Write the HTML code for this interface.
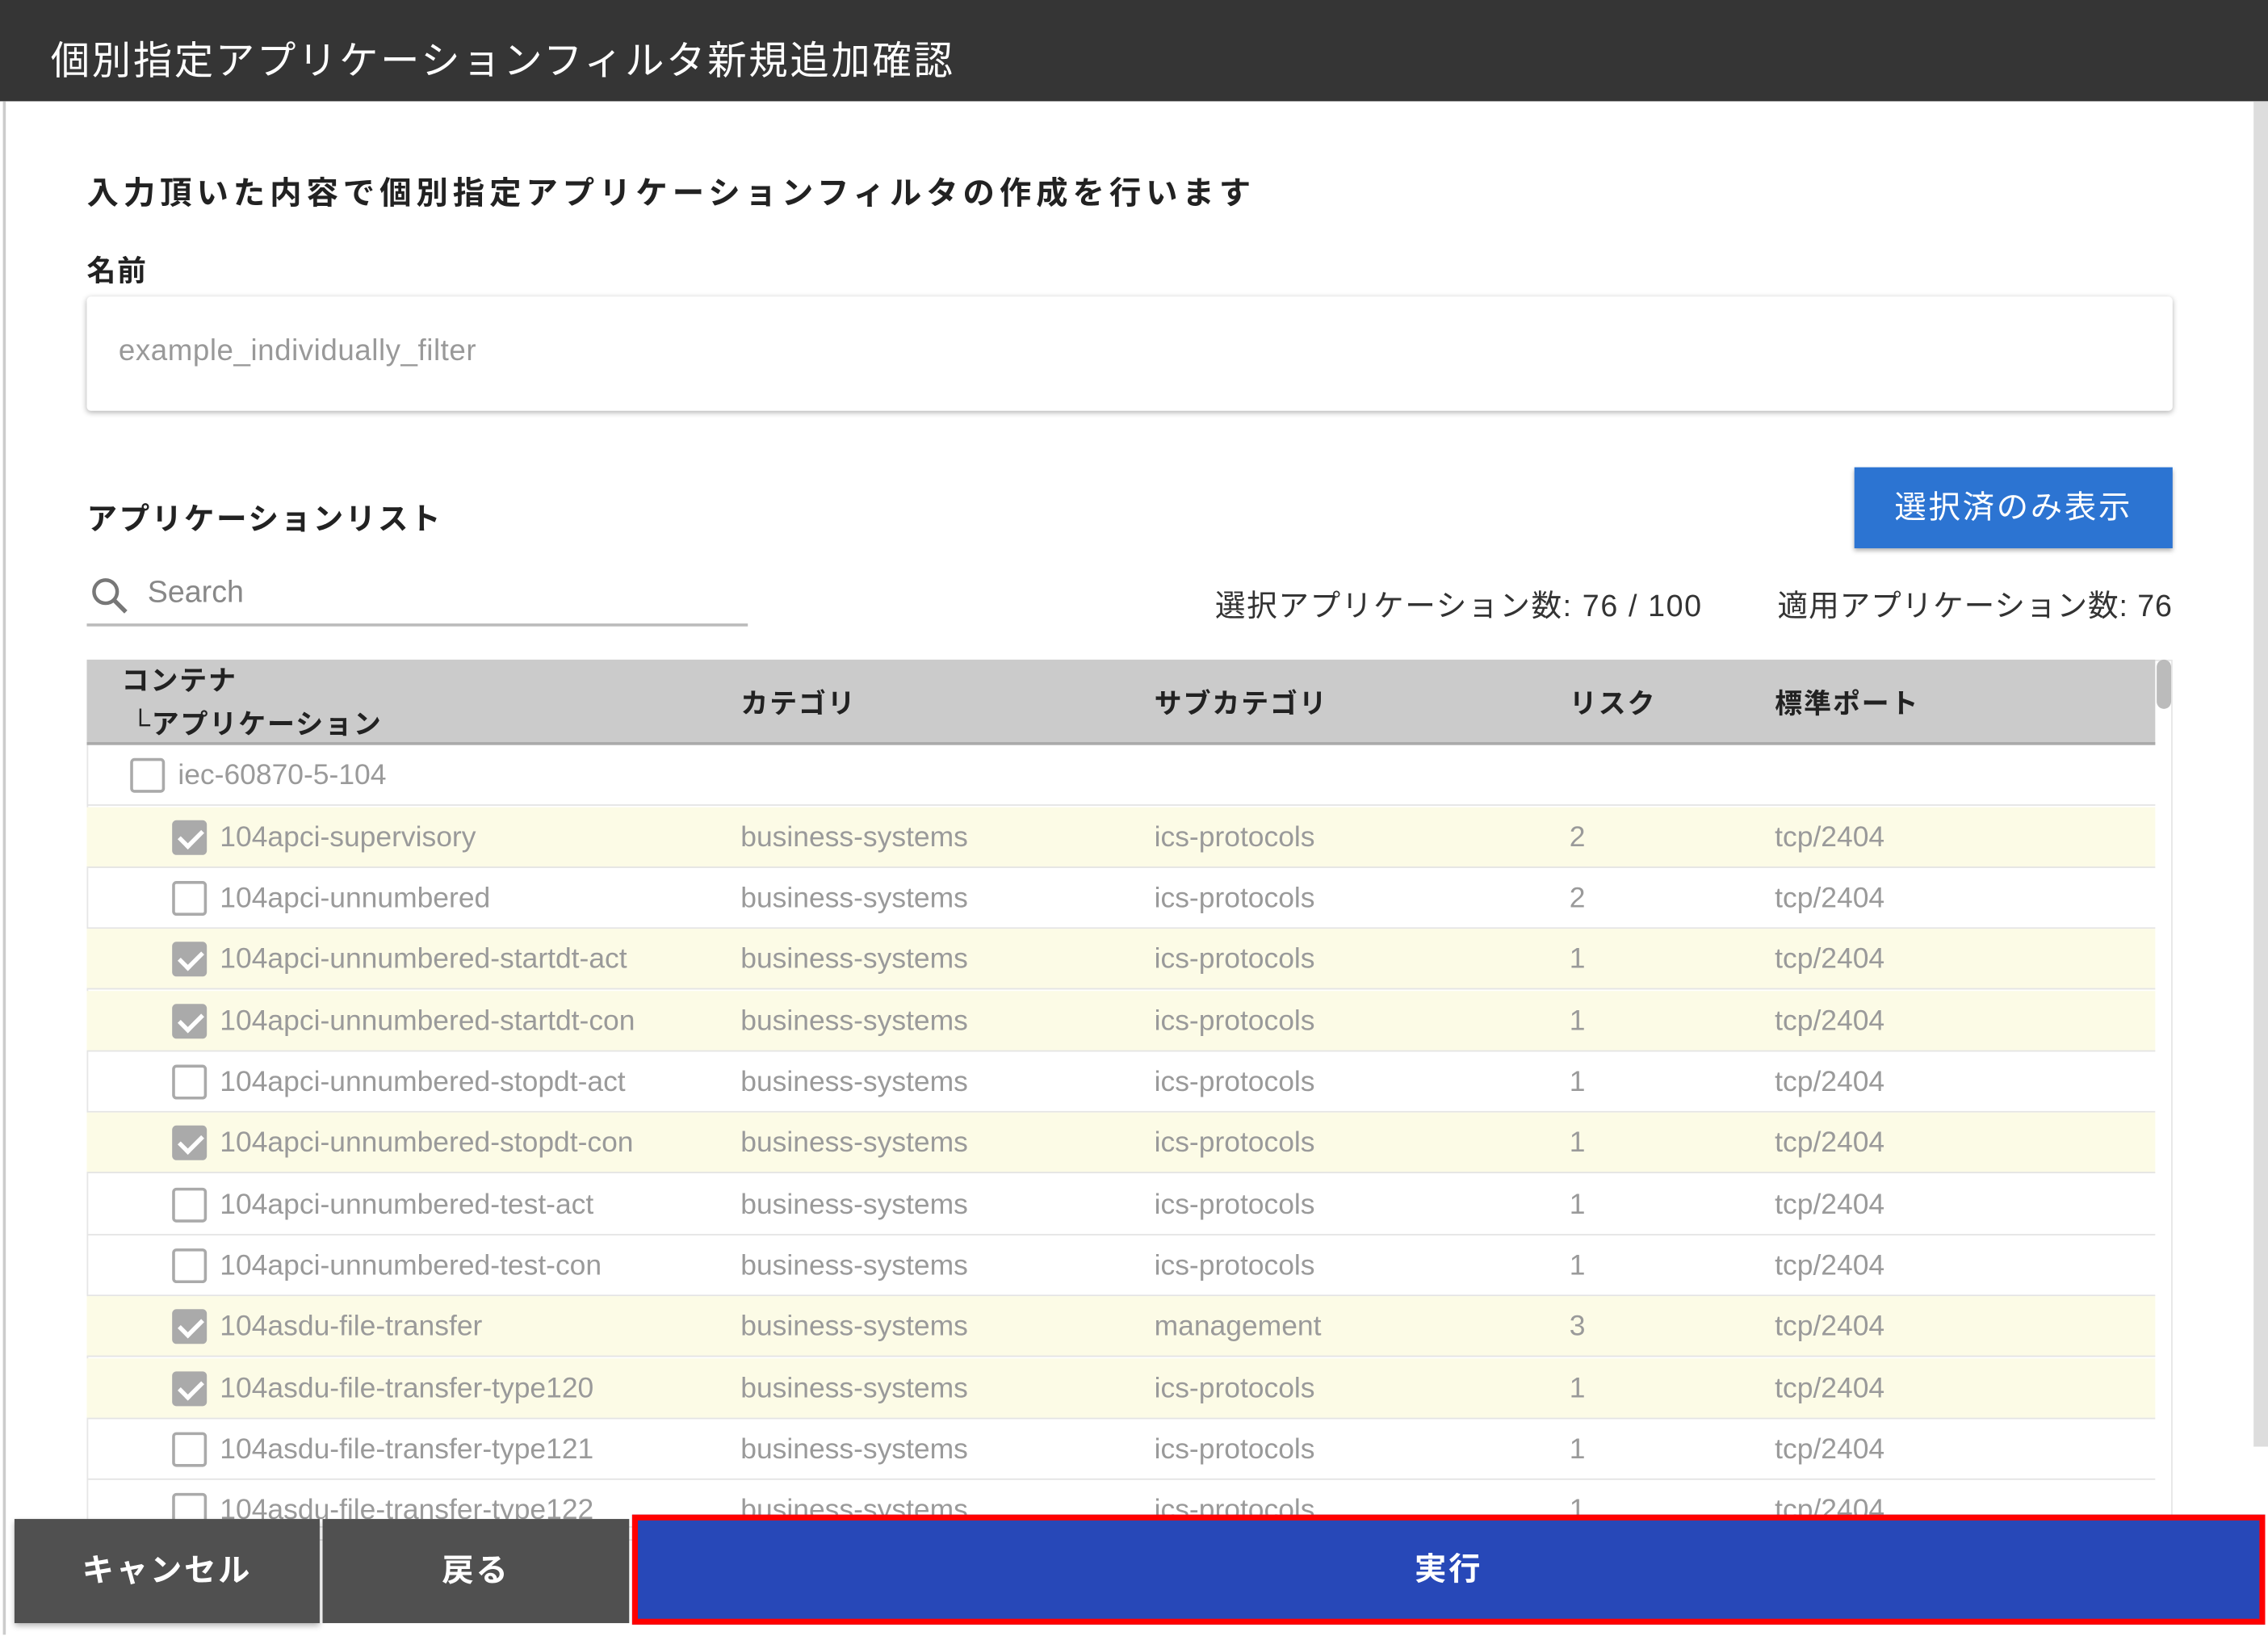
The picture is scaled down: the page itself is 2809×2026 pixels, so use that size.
<!DOCTYPE html>
<html><head><meta charset="utf-8"><style>
*{margin:0;padding:0;box-sizing:border-box}
body{width:2809px;height:2025px;overflow:hidden;background:#fff;font-family:"Liberation Sans","Noto Sans CJK JP",sans-serif}
#w{width:1568px;height:1131px;transform:scale(1.7915);transform-origin:0 0;position:relative;background:#fff}
.a{position:absolute;white-space:nowrap}
.hd{left:0;top:0;width:1568px;height:70px;background:#353535}
.b{font-weight:bold;color:#222}
.row{position:absolute;left:60px;width:1430px;height:42px;border-bottom:1.5px solid #e4e4e4;font-size:19.8px;color:#9a9a9a}
.row span{position:absolute;top:10px}
.hl{background:#fcfbe6}
.cb{position:absolute;top:9px;width:24px;height:24px;border:2px solid #aaa;border-radius:3px;background:#fff}
.cb.on{background:#aaa;border-color:#aaa}
.cb.on:after{content:"";position:absolute;left:6px;top:1px;width:7px;height:13px;border:solid #fff;border-width:0 3px 3px 0;transform:rotate(45deg)}
</style></head><body><div id="w">
<div class="a hd"></div>
<div class="a" style="left:35px;top:20px;font-size:27px;color:#fff;letter-spacing:1.5px">個別指定アプリケーションフィルタ新規追加確認</div>
<div class="a" style="left:2px;top:70px;width:1.5px;height:1060px;background:#ccc"></div>
<div class="a" style="left:1558px;top:70px;width:10px;height:930px;background:#ddd"></div>
<div class="a b" style="left:60px;top:116px;font-size:22px;letter-spacing:3.3px">入力頂いた内容で個別指定アプリケーションフィルタの作成を行います</div>
<div class="a b" style="left:60px;top:171px;font-size:20px;letter-spacing:1px">名前</div>
<div class="a" style="left:60px;top:205px;width:1442px;height:79px;background:#fff;box-shadow:0 1px 4px rgba(0,0,0,.3);border-radius:3px"></div>
<div class="a" style="left:82px;top:231px;font-size:20.5px;color:#999;letter-spacing:.3px">example_individually_filter</div>
<div class="a b" style="left:60px;top:343px;font-size:21px;letter-spacing:1.4px">アプリケーションリスト</div>
<div class="a" style="left:1282px;top:323px;width:220px;height:56px;background:#2c74d2;box-shadow:0 2px 3px rgba(0,0,0,.3);color:#fff;font-size:22px;text-align:center;line-height:56px;letter-spacing:1.5px">選択済のみ表示</div>
<svg class="a" style="left:62px;top:398px" width="28" height="28" viewBox="0 0 28 28"><circle cx="11" cy="11" r="8" fill="none" stroke="#777" stroke-width="2.5"/><path d="M17 17l8 8" stroke="#777" stroke-width="3"/></svg>
<div class="a" style="left:102px;top:398px;font-size:21px;color:#888">Search</div>
<div class="a" style="left:60px;top:431px;width:457px;height:1.5px;background:#bbb"></div>
<div class="a" style="left:840px;top:403px;font-size:21px;color:#333;letter-spacing:.9px">選択アプリケーション数: 76 / 100</div>
<div class="a" style="right:66px;top:403px;font-size:21px;color:#333;letter-spacing:.5px">適用アプリケーション数: 76</div>
<div class="a" style="left:60px;top:456px;width:1442px;height:600px;border:1px solid #e6e6e6"></div>
<div class="a" style="left:60px;top:456px;width:1430px;height:59px;background:#cbcbcb;border-bottom:2px solid #aaa"></div>
<div class="a" style="left:1491px;top:456px;width:10px;height:34px;background:#bbb;border-radius:5px"></div>
<div class="a b" style="left:84px;top:457px;font-size:19px;line-height:30px;letter-spacing:1px">コンテナ<br>&nbsp;└アプリケーション</div>
<div class="a b" style="left:512px;top:472px;font-size:19px;letter-spacing:1px">カテゴリ</div>
<div class="a b" style="left:798px;top:472px;font-size:19px;letter-spacing:1px">サブカテゴリ</div>
<div class="a b" style="left:1085px;top:472px;font-size:19px;letter-spacing:1px">リスク</div>
<div class="a b" style="left:1227px;top:472px;font-size:19px;letter-spacing:1px">標準ポート</div>
<div class="row" style="top:515px"><div class="cb" style="left:30px"></div><span style="left:63px">iec-60870-5-104</span></div>
<div class="row hl" style="top:557.5px"><div class="cb on" style="left:59px"></div><span style="left:92px">104apci-supervisory</span><span style="left:452px">business-systems</span><span style="left:738px">ics-protocols</span><span style="left:1025px">2</span><span style="left:1167px">tcp/2404</span></div>
<div class="row" style="top:600px"><div class="cb" style="left:59px"></div><span style="left:92px">104apci-unnumbered</span><span style="left:452px">business-systems</span><span style="left:738px">ics-protocols</span><span style="left:1025px">2</span><span style="left:1167px">tcp/2404</span></div>
<div class="row hl" style="top:642px"><div class="cb on" style="left:59px"></div><span style="left:92px">104apci-unnumbered-startdt-act</span><span style="left:452px">business-systems</span><span style="left:738px">ics-protocols</span><span style="left:1025px">1</span><span style="left:1167px">tcp/2404</span></div>
<div class="row hl" style="top:684.5px"><div class="cb on" style="left:59px"></div><span style="left:92px">104apci-unnumbered-startdt-con</span><span style="left:452px">business-systems</span><span style="left:738px">ics-protocols</span><span style="left:1025px">1</span><span style="left:1167px">tcp/2404</span></div>
<div class="row" style="top:727px"><div class="cb" style="left:59px"></div><span style="left:92px">104apci-unnumbered-stopdt-act</span><span style="left:452px">business-systems</span><span style="left:738px">ics-protocols</span><span style="left:1025px">1</span><span style="left:1167px">tcp/2404</span></div>
<div class="row hl" style="top:769px"><div class="cb on" style="left:59px"></div><span style="left:92px">104apci-unnumbered-stopdt-con</span><span style="left:452px">business-systems</span><span style="left:738px">ics-protocols</span><span style="left:1025px">1</span><span style="left:1167px">tcp/2404</span></div>
<div class="row" style="top:811.5px"><div class="cb" style="left:59px"></div><span style="left:92px">104apci-unnumbered-test-act</span><span style="left:452px">business-systems</span><span style="left:738px">ics-protocols</span><span style="left:1025px">1</span><span style="left:1167px">tcp/2404</span></div>
<div class="row" style="top:854px"><div class="cb" style="left:59px"></div><span style="left:92px">104apci-unnumbered-test-con</span><span style="left:452px">business-systems</span><span style="left:738px">ics-protocols</span><span style="left:1025px">1</span><span style="left:1167px">tcp/2404</span></div>
<div class="row hl" style="top:896px"><div class="cb on" style="left:59px"></div><span style="left:92px">104asdu-file-transfer</span><span style="left:452px">business-systems</span><span style="left:738px">management</span><span style="left:1025px">3</span><span style="left:1167px">tcp/2404</span></div>
<div class="row hl" style="top:938.5px"><div class="cb on" style="left:59px"></div><span style="left:92px">104asdu-file-transfer-type120</span><span style="left:452px">business-systems</span><span style="left:738px">ics-protocols</span><span style="left:1025px">1</span><span style="left:1167px">tcp/2404</span></div>
<div class="row" style="top:981px"><div class="cb" style="left:59px"></div><span style="left:92px">104asdu-file-transfer-type121</span><span style="left:452px">business-systems</span><span style="left:738px">ics-protocols</span><span style="left:1025px">1</span><span style="left:1167px">tcp/2404</span></div>
<div class="row" style="top:1023px"><div class="cb" style="left:59px"></div><span style="left:92px">104asdu-file-transfer-type122</span><span style="left:452px">business-systems</span><span style="left:738px">ics-protocols</span><span style="left:1025px">1</span><span style="left:1167px">tcp/2404</span></div>
<div class="a" style="left:10px;top:1050px;width:211px;height:72px;background:#505050;color:#fff;font-weight:bold;font-size:22px;text-align:center;line-height:72px;letter-spacing:1.5px;box-shadow:0 2px 4px rgba(0,0,0,.3)">キャンセル</div>
<div class="a" style="left:223px;top:1050px;width:212px;height:72px;background:#505050;color:#fff;font-weight:bold;font-size:22px;text-align:center;line-height:72px;letter-spacing:1.5px">戻る</div>
<div class="a" style="left:437px;top:1047px;width:1129px;height:76px;background:#2748b8;border:4px solid #f00;color:#fff;font-weight:bold;font-size:22px;text-align:center;line-height:68px;letter-spacing:1.5px">実行</div>
</div></body></html>
